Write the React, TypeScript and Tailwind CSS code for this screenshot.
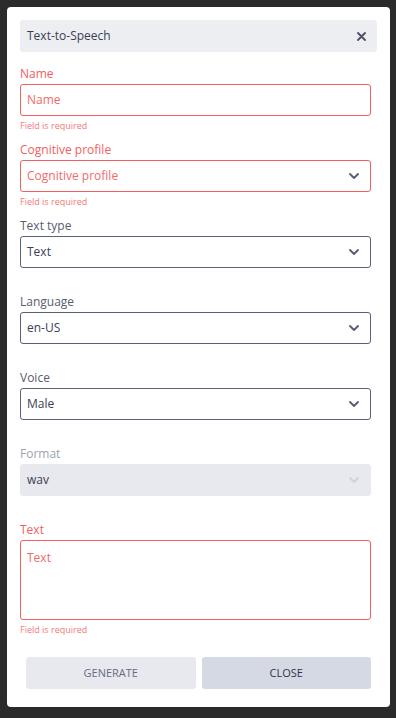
import React from "react";

const font = { fontFamily: '"Open Sans", "Noto Sans", sans-serif' };

function Chevron({ color = "#565c76" }: { color?: string }) {
  return (
    <svg width="10" height="6" viewBox="0 0 10 6" fill="none">
      <path d="M1 1l4 4 4-4" stroke={color} strokeWidth="1.8" strokeLinecap="round" strokeLinejoin="round" />
    </svg>
  );
}

type FieldProps = {
  label: string;
  value: string;
  error?: boolean;
  select?: boolean;
  disabled?: boolean;
  placeholder?: boolean;
};

function Field({ label, value, error, select, disabled, placeholder }: FieldProps) {
  const labelColor = error ? "text-[#f26060]" : disabled ? "text-[#9ea2b0]" : "text-[#575c70]";
  const box = disabled
    ? "bg-[#e8e9ee] border border-[#e8e9ee]"
    : error
    ? "bg-white border border-[#f25f5f]"
    : "bg-white border border-[#5a607a]";
  const textColor = placeholder ? "text-[#f26a6a]" : "text-[#3c4054]";
  return (
    <div className="flex flex-col">
      <div className={`h-4 leading-4 text-[12px] mb-[2px] ${labelColor}`}>{label}</div>
      <div className={`h-8 rounded-[3px] flex items-center justify-between pl-[6px] pr-[11px] ${box}`}>
        <span className={`text-[12px] ${textColor}`}>{value}</span>
        {select && <Chevron color={disabled ? "#d0d3dc" : "#565c76"} />}
      </div>
      <div className="h-[26px] pt-[4px] leading-[12px] text-[9px] text-[#f47a7a]">
        {error ? "Field is required" : ""}
      </div>
    </div>
  );
}

export default function App() {
  return (
    <div className="w-[396px] h-[718px] bg-[#2b2b2b] p-[7px]" style={font}>
      <div className="bg-white rounded-[4px] px-[13px] pt-[13px] pb-[18px] w-[383px]">
        <div className="h-8 bg-[#edeef2] rounded-[3px] flex items-center justify-between pl-[7px] pr-[11px]">
          <span className="text-[12px] text-[#3b3f51]">Text-to-Speech</span>
          <svg width="9" height="9" viewBox="0 0 9 9" fill="none">
            <path d="M1 1l7 7M8 1L1 8" stroke="#4a4f64" strokeWidth="1.8" strokeLinecap="round" />
          </svg>
        </div>
        <div className="mt-[14px] pr-[6px]">
          <Field label="Name" value="Name" error placeholder />
          <Field label="Cognitive profile" value="Cognitive profile" error placeholder select />
          <Field label="Text type" value="Text" select />
          <Field label="Language" value="en-US" select />
          <Field label="Voice" value="Male" select />
          <Field label="Format" value="wav" select disabled />
          <div className="flex flex-col">
            <div className="h-4 leading-4 text-[12px] mb-[2px] text-[#f26060]">Text</div>
            <div className="h-20 rounded-[3px] border border-[#f25f5f] bg-white px-[6px] pt-[3px]">
              <span className="text-[12px] text-[#f26a6a]">Text</span>
            </div>
            <div className="h-[26px] pt-[4px] leading-[12px] text-[9px] text-[#f47a7a]">Field is required</div>
          </div>
          <div className="mt-[11px] flex gap-[6px] pl-[6px]">
            <button className="flex-1 h-8 rounded-[3px] bg-[#e8e9ef] text-[11px] font-medium text-[#666c84]">
              GENERATE
            </button>
            <button className="flex-1 h-8 rounded-[3px] bg-[#d5d9e4] text-[11px] font-medium text-[#2f3346]">
              CLOSE
            </button>
          </div>
        </div>
      </div>
    </div>
  );
}
